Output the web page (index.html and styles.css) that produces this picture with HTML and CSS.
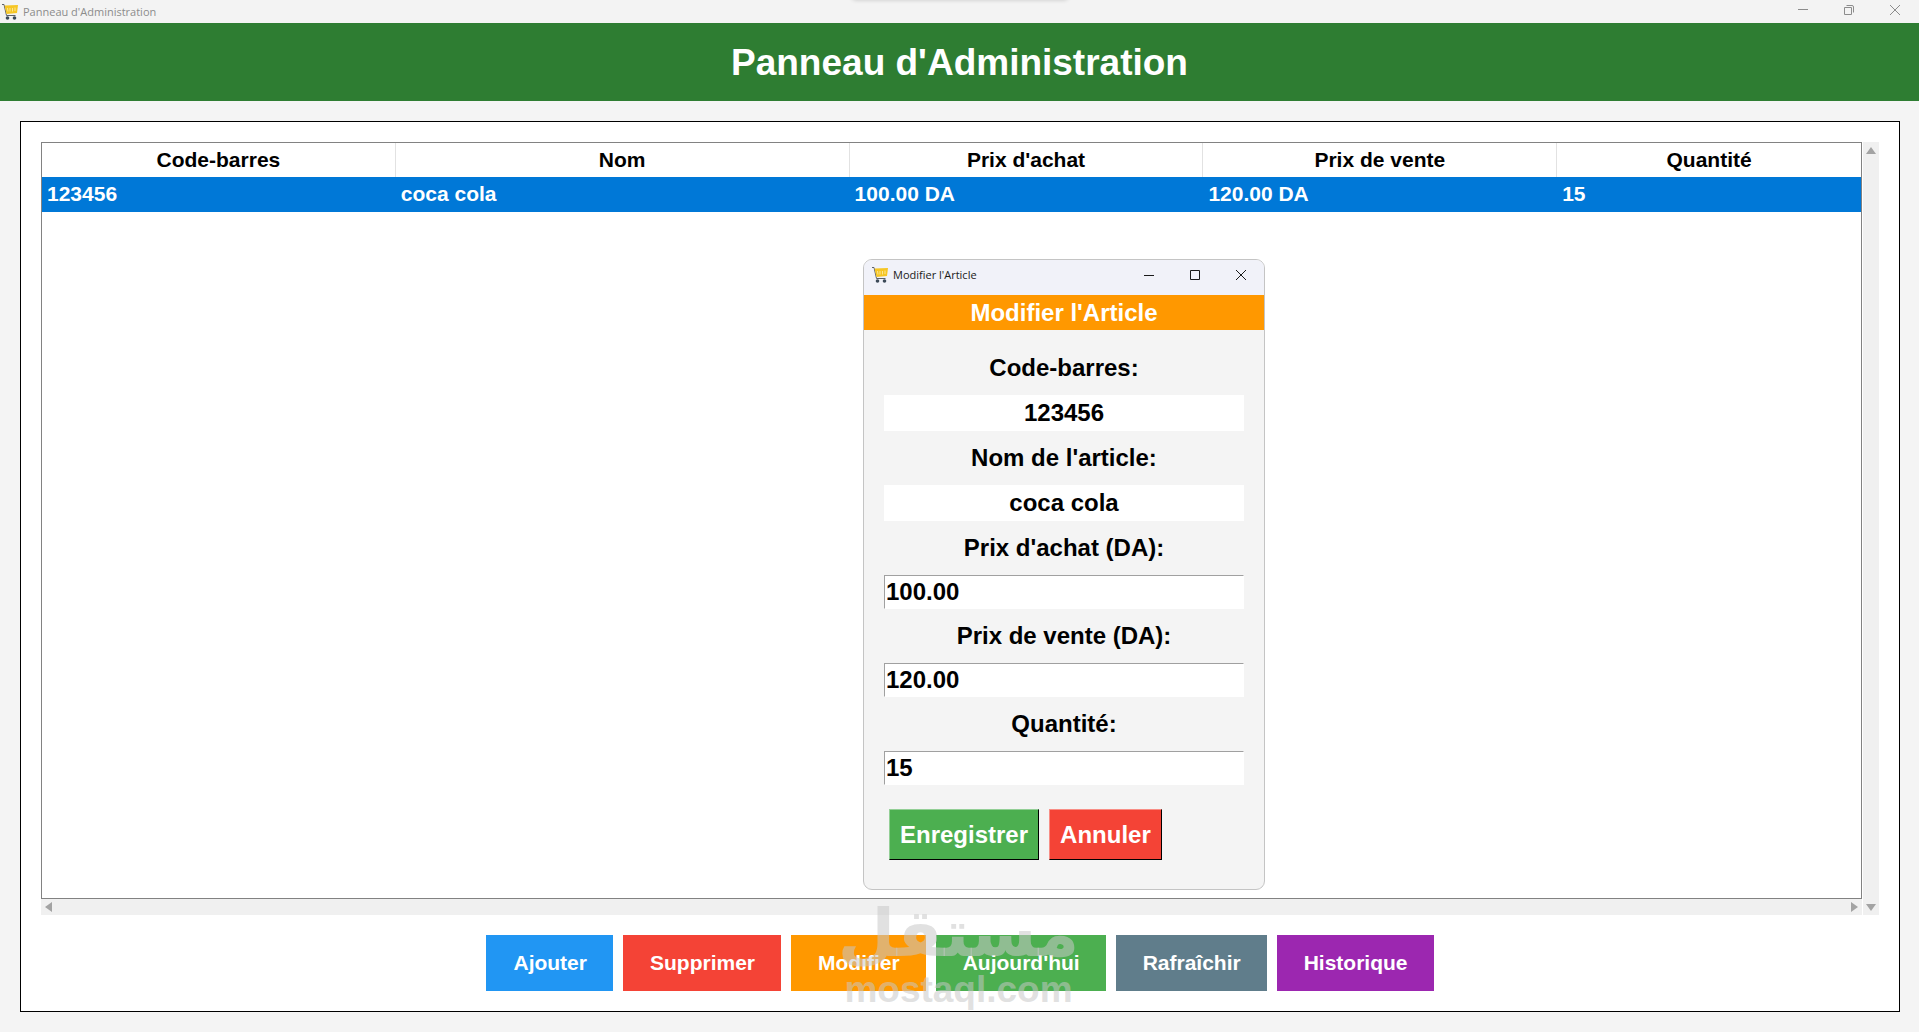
FILE: index.html
```html
<!DOCTYPE html>
<html lang="fr">
<head>
<meta charset="utf-8">
<meta name="viewport" content="width=device-width, initial-scale=1">
<title>Panneau d'Administration</title>
<link rel="stylesheet" href="styles.css">
</head>
<body>
<svg class="defs" width="0" height="0" aria-hidden="true">
  <symbol id="cart" viewBox="0 0 16 16">
    <path d="M0 .5H2L4.500 11.500H13.500" fill="none" stroke="#5c6168" stroke-width="1"/>
    <path d="M2.500 1.500 16 1 15 9 4.500 10Z" fill="#f6c624"/>
    <path d="M5.500 4 6 7.500M8 4V7.500M10.500 4V7.500M13 3.500V7" stroke="#fbe694" stroke-width="1"/>
    <circle cx="5.500" cy="14" r="1.800" fill="#3c4a58"/>
    <circle cx="12.500" cy="14" r="1.800" fill="#3c4a58"/>
  </symbol>
</svg>

<div class="titlebar">
  <svg class="app-icon" aria-hidden="true"><use href="#cart"/></svg>
  <span class="titlebar-text">Panneau d'Administration</span>
  <div class="window-controls">
    <button type="button" aria-label="Réduire"><svg viewBox="0 0 12 12"><path d="M1 5.500H11"/></svg></button>
    <button type="button" aria-label="Restaurer"><svg viewBox="0 0 12 12"><path d="M1.500 3.500H8.500V10.500H1.500ZM3.500 1.500H9A1.500 1.500 0 0 1 10.500 3V8.500"/></svg></button>
    <button type="button" aria-label="Fermer"><svg viewBox="0 0 12 12"><path d="M1 1 11 11M11 1 1 11"/></svg></button>
  </div>
  <div class="top-handle"></div>
</div>

<header class="banner"><h1>Panneau d'Administration</h1></header>

<main class="panel">
  <div class="listing">
    <div class="table-box">
      <table class="articles">
        <colgroup>
          <col class="col-price"><col class="col-name"><col class="col-price"><col class="col-price"><col>
        </colgroup>
        <thead>
          <tr><th>Code-barres</th><th>Nom</th><th>Prix d'achat</th><th>Prix de vente</th><th>Quantité</th></tr>
        </thead>
        <tbody>
          <tr class="selected"><td>123456</td><td>coca cola</td><td>100.00 DA</td><td>120.00 DA</td><td>15</td></tr>
        </tbody>
      </table>
    </div>
    <div class="scroll-v">
      <svg viewBox="0 0 10 7" width="10" height="7"><path d="M5 0 10 7H0Z"/></svg>
      <svg viewBox="0 0 10 7" width="10" height="7"><path d="M0 0H10L5 7Z"/></svg>
    </div>
    <div class="scroll-h">
      <svg viewBox="0 0 7 10" width="7" height="10"><path d="M7 0V10L0 5Z"/></svg>
      <svg viewBox="0 0 7 10" width="7" height="10"><path d="M0 0 7 5 0 10Z"/></svg>
    </div>
  </div>
  <div class="actions">
    <button type="button" class="action blue">Ajouter</button>
    <button type="button" class="action red">Supprimer</button>
    <button type="button" class="action orange">Modifier</button>
    <button type="button" class="action green">Aujourd'hui</button>
    <button type="button" class="action slate">Rafraîchir</button>
    <button type="button" class="action purple">Historique</button>
  </div>
</main>

<section class="dialog" role="dialog" aria-label="Modifier l'Article">
  <div class="dialog-titlebar">
    <svg class="app-icon" aria-hidden="true"><use href="#cart"/></svg>
    <span class="titlebar-text">Modifier l'Article</span>
    <div class="window-controls">
      <button type="button" aria-label="Réduire"><svg viewBox="0 0 12 12"><path d="M1 6.500H11"/></svg></button>
      <button type="button" aria-label="Agrandir"><svg viewBox="0 0 12 12"><path d="M1.500 1.500H10.500V10.500H1.500Z"/></svg></button>
      <button type="button" aria-label="Fermer"><svg viewBox="0 0 12 12"><path d="M1 1 11 11M11 1 1 11"/></svg></button>
    </div>
  </div>
  <h2>Modifier l'Article</h2>
  <form class="form">
    <label for="code">Code-barres:</label>
    <input id="code" class="fixed" type="text" value="123456" readonly>
    <label for="name">Nom de l'article:</label>
    <input id="name" class="fixed" type="text" value="coca cola" readonly>
    <label for="buy">Prix d'achat (DA):</label>
    <input id="buy" class="entry" type="text" value="100.00">
    <label for="sell">Prix de vente (DA):</label>
    <input id="sell" class="entry" type="text" value="120.00">
    <label for="qty">Quantité:</label>
    <input id="qty" class="entry" type="text" value="15">
    <div class="form-buttons">
      <button type="button" class="raised green">Enregistrer</button>
      <button type="button" class="raised red">Annuler</button>
    </div>
  </form>
</section>

<div class="watermark">
  <span class="mark-arabic" lang="ar" dir="rtl">مستقل</span>
  <span class="mark-latin">mostaql.com</span>
</div>
</body>
</html>
```
FILE: styles.css
```css
* { box-sizing: border-box; }

body {
  position: relative;
  display: flex;
  flex-direction: column;
  min-height: 100vh;
  margin: 0;
  background: #f4f4f4;
  color: #000;
  font-family: "Liberation Sans", Arial, sans-serif;
  font-weight: bold;
}

button, input { font: inherit; color: inherit; }
.defs { position: absolute; }

/* Window title bars */
.titlebar, .dialog-titlebar {
  display: flex;
  align-items: center;
  font: 11px/16px "Open Sans", "Noto Sans", sans-serif;
}
.titlebar {
  position: relative;
  height: 23px;
  padding-left: 2px;
  overflow: hidden;
  background: #f3f3f3;
  color: #8c8c8c;
}
.top-handle {
  position: absolute;
  top: -8px;
  left: 50%;
  width: 216px;
  height: 8px;
  margin-left: -108px;
  border-radius: 8px;
  box-shadow: 0 0 4px #00000030;
}
.dialog-titlebar {
  height: 35px;
  padding: 0 0 5px 8px;
  background: #f1f2f9;
  color: #1a1a1a;
}
.app-icon { width: 16px; height: 16px; margin-right: 5px; }
.window-controls { display: flex; margin-left: auto; }
.window-controls button {
  display: flex;
  justify-content: center;
  align-items: center;
  width: 46px;
  height: 20px;
  padding: 0;
  border: 0;
  background: none;
}
.titlebar .window-controls { margin: 0 1px 3px auto; }
.window-controls svg {
  width: 12px;
  height: 12px;
  fill: none;
  stroke: currentColor;
}

.banner { padding: 19px 20px 17px; background: #2e7d32; color: #fff; }
.banner h1 { margin: 0; font-size: 37px; line-height: 42px; text-align: center; }

/* Main panel */
.panel {
  flex: 1;
  display: flex;
  flex-direction: column;
  gap: 20px;
  margin: 20px 19px 20px 20px;
  padding: 20px;
  border: 1px solid #000;
  background: #fff;
}
.listing {
  flex: 1;
  display: grid;
  grid-template-columns: 1fr 16px;
  grid-template-rows: 1fr 16px;
  column-gap: 1px;
}
.table-box { border: 1px solid #828282; }
.articles {
  width: 100%;
  table-layout: fixed;
  border-collapse: separate;
  border-spacing: 0;
  font-size: 21px;
  line-height: 24px;
}
.col-price { width: 19.45%; }
.col-name { width: 24.95%; }
.articles th {
  padding: 5px 0;
  border-right: 1px solid #e2e2e2;
}
.articles th:last-child { border-right: 0; }
.articles td { padding: 5px; text-align: left; }
.articles td { padding-bottom: 6px; }
.selected { background: #0078d7; color: #fff; }

.scroll-v, .scroll-h {
  display: flex;
  justify-content: space-between;
  align-items: center;
  background: #f0f0f0;
}
.scroll-v { flex-direction: column; grid-row: 1 / 3; grid-column: 2; padding: 5px 0 4px; }
.scroll-h { grid-row: 2; grid-column: 1; padding: 0 4px; }
.scroll-v path, .scroll-h path { fill: #a3a3a3; }

.actions { display: flex; justify-content: center; gap: 10px; }
.action {
  padding: 16px 26px 16px 27px;
  border: 0;
  color: #fff;
  font-size: 21px;
  line-height: 24px;
}
.blue { background: #2196f3; }
.red { background: #f44336; }
.orange { background: #ff9800; }
.green { background: #4caf50; }
.slate { background: #607d8b; }
.purple { background: #9c27b0; }

/* Floating edit window */
.dialog {
  position: absolute;
  left: 863px;
  top: 259px;
  width: 402px;
  overflow: hidden;
  border: 1px solid #c4c4c4;
  border-radius: 9px;
  background: #f4f4f4;
  font-size: 24px;
}
.dialog h2 {
  margin: 0;
  padding: 4px 0 3px;
  background: #ff9800;
  color: #fff;
  font-size: 24px;
  line-height: 28px;
  text-align: center;
}
.form { display: flex; flex-direction: column; padding: 11px 20px 29px; }
.form label { padding: 13px 0; line-height: 28px; text-align: center; }
.form input { width: 100%; margin: 0; background: #fff; outline: 0; line-height: 28px; }
.fixed { height: 36px; padding: 0; border: 0; text-align: center; }
.entry {
  height: 34px;
  padding: 0 1px;
  border: 1px solid #fff;
  border-top-color: #a0a0a0;
  border-left-color: #a0a0a0;
}
.form-buttons { display: flex; gap: 10px; padding: 24px 5px 0; }
.raised {
  padding: 11px 10px 10px;
  border: 1px solid #000;
  border-top-color: #ffffff66;
  border-left-color: #ffffff66;
  color: #fff;
  line-height: 28px;
}

/* Site watermark laid over the bottom of the page */
.watermark {
  position: absolute;
  bottom: 22px;
  left: 50%;
  display: flex;
  flex-direction: column;
  align-items: center;
  width: 230px;
  margin-left: -116px;
  color: #c8c8c88c;
  pointer-events: none;
}
.mark-arabic { font: bold 66px/72px "DejaVu Sans", sans-serif; }
.mark-latin { font-size: 37px; line-height: 40px; }
```
